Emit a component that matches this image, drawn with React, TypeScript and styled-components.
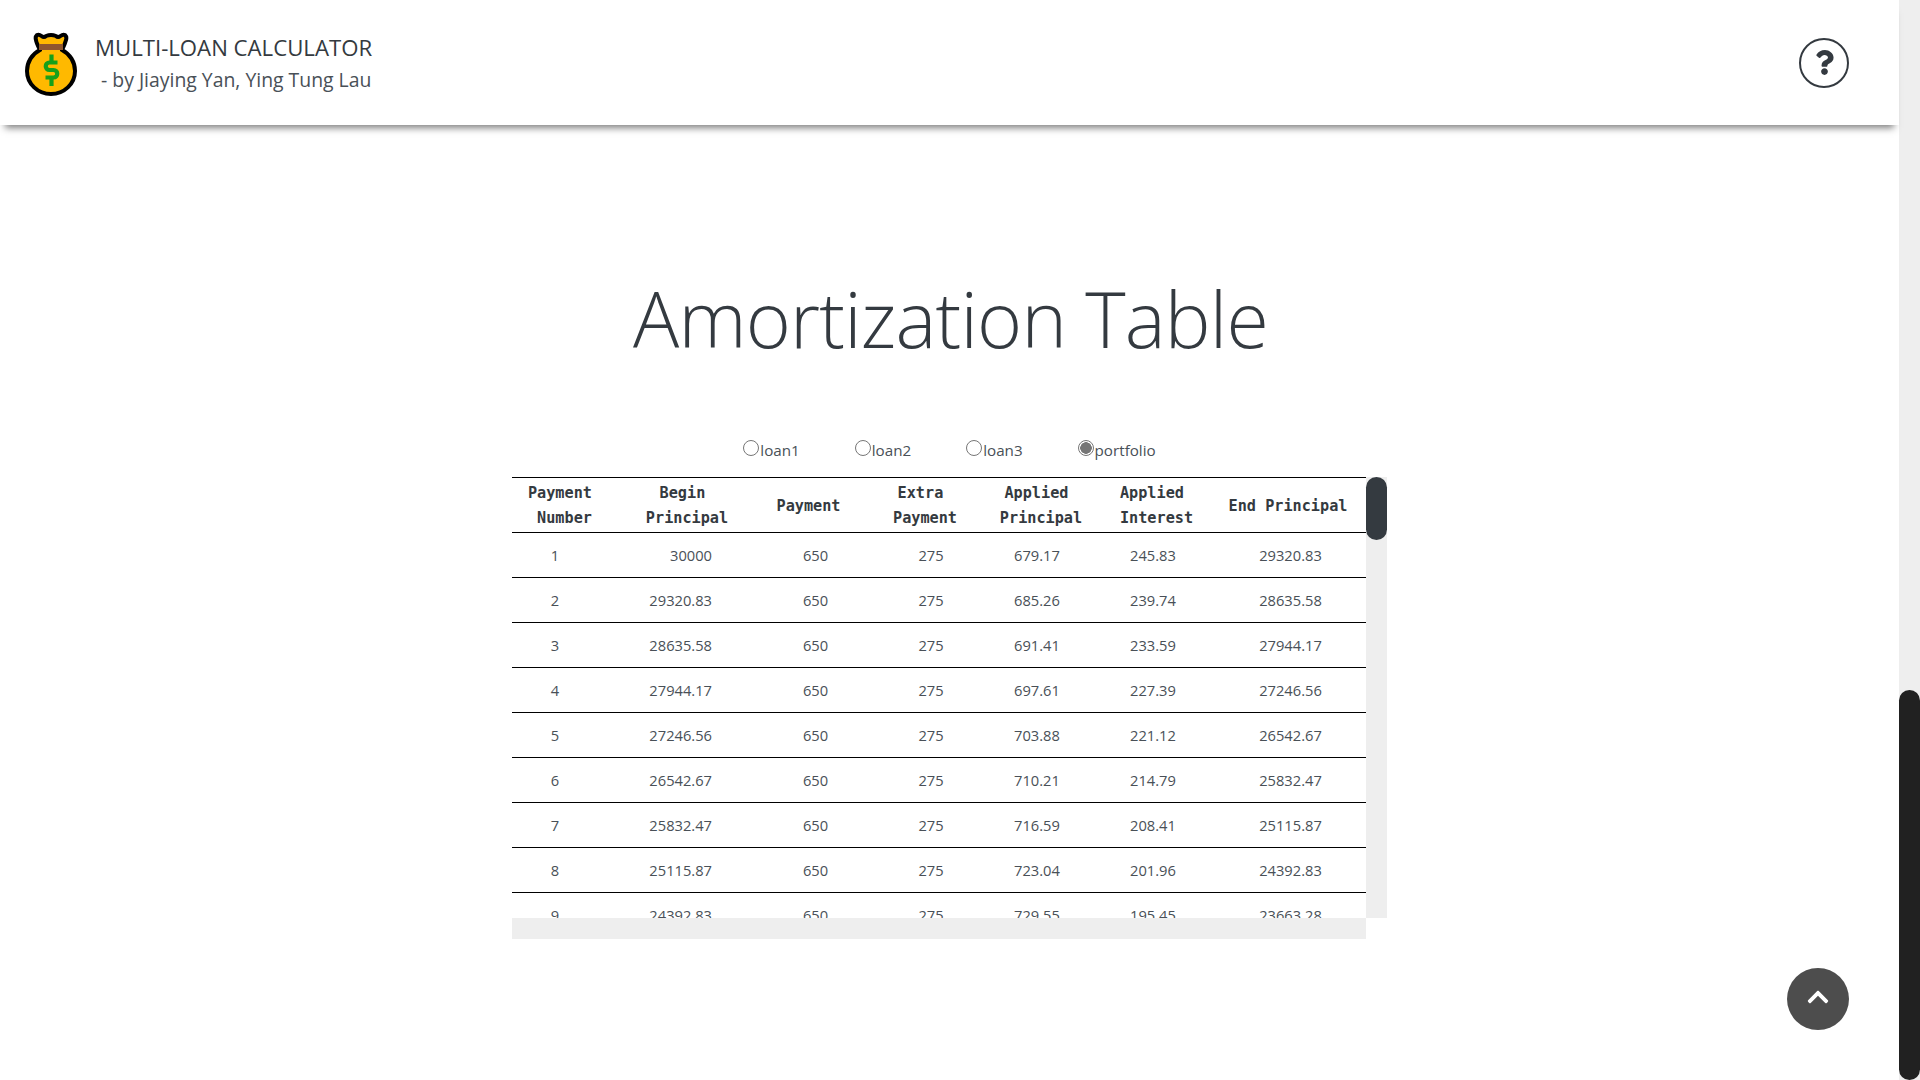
import React from "react";
import styled, { createGlobalStyle } from "styled-components";
import { FaChevronUp, FaQuestion } from "react-icons/fa";

const Global = createGlobalStyle`
  html, body { margin: 0; padding: 0; height: 100%; overflow: hidden; background: #fff; }
  body { font-family: "Open Sans", "Noto Sans", sans-serif; color: #343a40; }
`;

const Page = styled.div`
  position: relative;
  height: 100vh;
  display: flex;
  background: #fff;
`;

const Main = styled.main`
  flex: 1;
  min-width: 0;
  display: flex;
  flex-direction: column;
`;

const PageRail = styled.div`
  width: 21px;
  background: #eee;
  display: flex;
  flex-direction: column;
  justify-content: flex-end;
`;

const PageThumb = styled.div`
  height: 390px;
  border-radius: 11px;
  background: #212121;
`;

const TopBar = styled.header`
  position: relative;
  z-index: 5;
  height: 125px;
  flex: none;
  box-sizing: border-box;
  padding: 0 50px 0 25px;
  display: flex;
  align-items: center;
  justify-content: space-between;
  background: #fff;
  box-shadow: 0 8px 7px -5px rgba(0, 0, 0, 0.5);
`;

const Brand = styled.div`
  display: flex;
  align-items: center;
  gap: 19px;
`;

const LogoMark = styled.svg`
  display: block;
  margin-top: 3px;
`;

const BrandText = styled.div`
  display: flex;
  flex-direction: column;
  gap: 6px;
  padding-top: 2px;
`;

const BrandName = styled.div`
  font-size: 22.2px;
  line-height: 26px;
  color: #343a40;
  margin-left: -1px;
`;

const BrandBy = styled.div`
  font-size: 19.4px;
  line-height: 26px;
  color: #495057;
  padding-left: 5px;
`;

const HelpButton = styled.button`
  width: 50px;
  height: 50px;
  padding: 0;
  box-sizing: border-box;
  border: 2.5px solid #343a40;
  border-radius: 50%;
  background: #fff;
  color: #343a40;
  display: flex;
  align-items: center;
  justify-content: center;
  font-size: 25px;
`;

const Section = styled.section`
  flex: 1;
  padding-top: 146px;
  display: flex;
  flex-direction: column;
  align-items: center;
`;

const Title = styled.h1`
  margin: 0;
  padding-left: 2px;
  font-size: 77px;
  line-height: 96px;
  letter-spacing: -0.8px;
  font-weight: 300;
  color: #343a40;
  text-align: center;
`;

const RadioRow = styled.div`
  margin-top: 71px;
  height: 24px;
  display: flex;
  gap: 55px;
  align-items: center;
`;

const RadioLabel = styled.label`
  display: flex;
  align-items: center;
  font-size: 15.2px;
  line-height: 24px;
  color: #495057;
`;

const RadioInput = styled.input`
  appearance: none;
  box-sizing: border-box;
  width: 16px;
  height: 16px;
  margin: -5px 1px 0 0;
  border: 1px solid #767676;
  border-radius: 50%;
  background: #fff;
  &:checked {
    background: radial-gradient(circle, #767676 0 5.5px, #fff 6px);
  }
`;

const TableFrame = styled.div`
  margin-top: 15px;
  display: grid;
  grid-template-columns: 854px 21px;
  grid-template-rows: 441px 21px;
`;

const TableClip = styled.div`
  overflow: hidden;
`;

const VerticalRail = styled.div`
  background: #eee;
`;

const VerticalThumb = styled.div`
  height: 63px;
  border-radius: 11px;
  background: #343a40;
`;

const HorizontalRail = styled.div`
  background: #eee;
`;

const Table = styled.table`
  width: 854px;
  table-layout: fixed;
  border-collapse: collapse;
`;

const Col = styled.col<{ $w: number }>`
  width: ${(p) => p.$w}px;
`;

const HeadCell = styled.th<{ $pl: number; $pr: number }>`
  box-sizing: border-box;
  height: 55px;
  padding: 2px ${(p) => p.$pr}px 0 ${(p) => p.$pl}px;
  border-top: 1px solid #000;
  border-bottom: 1px solid #000;
  font-family: "DejaVu Sans Mono", "Liberation Mono", monospace;
  font-size: 15.2px;
  line-height: 25px;
  font-weight: 700;
  color: #343a40;
  text-align: center;
`;

const HeadLine = styled.span`
  display: block;
  white-space: pre;
`;

const Cell = styled.td<{ $pl: number; $pr: number; $align: string }>`
  box-sizing: border-box;
  height: 45px;
  padding: 0 ${(p) => p.$pr}px 0 ${(p) => p.$pl}px;
  border-bottom: 1px solid #000;
  font-size: 14.7px;
  line-height: 20px;
  color: #495057;
  text-align: ${(p) => p.$align};
`;

const TopButton = styled.button`
  position: absolute;
  left: 1787px;
  top: 968px;
  z-index: 6;
  width: 62px;
  height: 62px;
  padding: 0 0 4px;
  border: none;
  border-radius: 50%;
  background: #4d4d4d;
  color: #fff;
  display: flex;
  align-items: center;
  justify-content: center;
  font-size: 24px;
`;

const widths = [105, 140, 108, 120, 110, 120, 151];
const headers: string[][] = [
  ["Payment ", "Number"],
  ["Begin ", "Principal"],
  ["Payment"],
  ["Extra ", "Payment"],
  ["Applied ", "Principal"],
  ["Applied ", "Interest"],
  ["End Principal"],
];
const headPad: [number, number][] = [
  [0, 0],
  [0, 0],
  [0, 5],
  [0, 0],
  [2, 0],
  [3, 0],
  [0, 5],
];
const cellPad: { pl: number; pr: number; align: string }[] = [
  { pl: 0, pr: 19, align: "center" },
  { pl: 0, pr: 45, align: "right" },
  { pl: 9, pr: 0, align: "center" },
  { pl: 12, pr: 0, align: "center" },
  { pl: 0, pr: 6, align: "center" },
  { pl: 0, pr: 4, align: "center" },
  { pl: 0, pr: 0, align: "center" },
];

const rows: (string | number)[][] = [
  [1, "30000", 650, 275, "679.17", "245.83", "29320.83"],
  [2, "29320.83", 650, 275, "685.26", "239.74", "28635.58"],
  [3, "28635.58", 650, 275, "691.41", "233.59", "27944.17"],
  [4, "27944.17", 650, 275, "697.61", "227.39", "27246.56"],
  [5, "27246.56", 650, 275, "703.88", "221.12", "26542.67"],
  [6, "26542.67", 650, 275, "710.21", "214.79", "25832.47"],
  [7, "25832.47", 650, 275, "716.59", "208.41", "25115.87"],
  [8, "25115.87", 650, 275, "723.04", "201.96", "24392.83"],
  [9, "24392.83", 650, 275, "729.55", "195.45", "23663.28"],
];

const Logo = () => (
  <LogoMark width="52" height="64" viewBox="0 0 52 64" aria-hidden="true">
    <path
      d="M12 3 Q14 2 16.5 4 Q19 6 21 4 Q26 2 31 4 Q33 6 35.5 4 Q38 2 40 3 Q42 5 41 8 Q40 12 37 18 C45 22 50 30 50 39 C50 52 39 62 26 62 C13 62 2 52 2 39 C2 30 7 22 15 18 C12 12 11 9 11 8 Q10 5 12 3 Z"
      fill="#FFB900"
      stroke="#000"
      strokeWidth="4"
      strokeLinejoin="round"
    />
    <rect x="14" y="12" width="24" height="6" fill="#8E562E" />
    <path
      d="M32.5 30.5 H24.5 C19.5 30.5 19.5 38 24.5 38 H28.5 C33.5 38 33.5 45.5 28.5 45.5 H20.5"
      fill="none"
      stroke="#16A01A"
      strokeWidth="4.2"
    />
    <path d="M26.5 22.5 V30 M26.5 46 V54" stroke="#16A01A" strokeWidth="4.2" />
  </LogoMark>
);

export default function App() {
  return (
    <Page>
      <Global />
      <Main>
        <TopBar>
          <Brand>
            <Logo />
            <BrandText>
              <BrandName>MULTI-LOAN CALCULATOR</BrandName>
              <BrandBy>- by Jiaying Yan, Ying Tung Lau</BrandBy>
            </BrandText>
          </Brand>
          <HelpButton aria-label="Help">
            <FaQuestion />
          </HelpButton>
        </TopBar>
        <Section>
          <Title>Amortization Table</Title>
          <RadioRow>
            {["loan1", "loan2", "loan3", "portfolio"].map((name) => (
              <RadioLabel key={name}>
                <RadioInput type="radio" name="schedule" defaultChecked={name === "portfolio"} />
                {name}
              </RadioLabel>
            ))}
          </RadioRow>
          <TableFrame>
            <TableClip>
              <Table>
                <colgroup>
                  {widths.map((w, i) => (
                    <Col key={i} $w={w} />
                  ))}
                </colgroup>
                <thead>
                  <tr>
                    {headers.map((lines, i) => (
                      <HeadCell key={i} $pl={headPad[i][0]} $pr={headPad[i][1]}>
                        {lines.map((line) => (
                          <HeadLine key={line}>{line}</HeadLine>
                        ))}
                      </HeadCell>
                    ))}
                  </tr>
                </thead>
                <tbody>
                  {rows.map((row) => (
                    <tr key={row[0]}>
                      {row.map((value, i) => (
                        <Cell key={i} $pl={cellPad[i].pl} $pr={cellPad[i].pr} $align={cellPad[i].align}>
                          {value}
                        </Cell>
                      ))}
                    </tr>
                  ))}
                </tbody>
              </Table>
            </TableClip>
            <VerticalRail>
              <VerticalThumb />
            </VerticalRail>
            <HorizontalRail />
          </TableFrame>
        </Section>
      </Main>
      <PageRail>
        <PageThumb />
      </PageRail>
      <TopButton aria-label="Back to top">
        <FaChevronUp />
      </TopButton>
    </Page>
  );
}
